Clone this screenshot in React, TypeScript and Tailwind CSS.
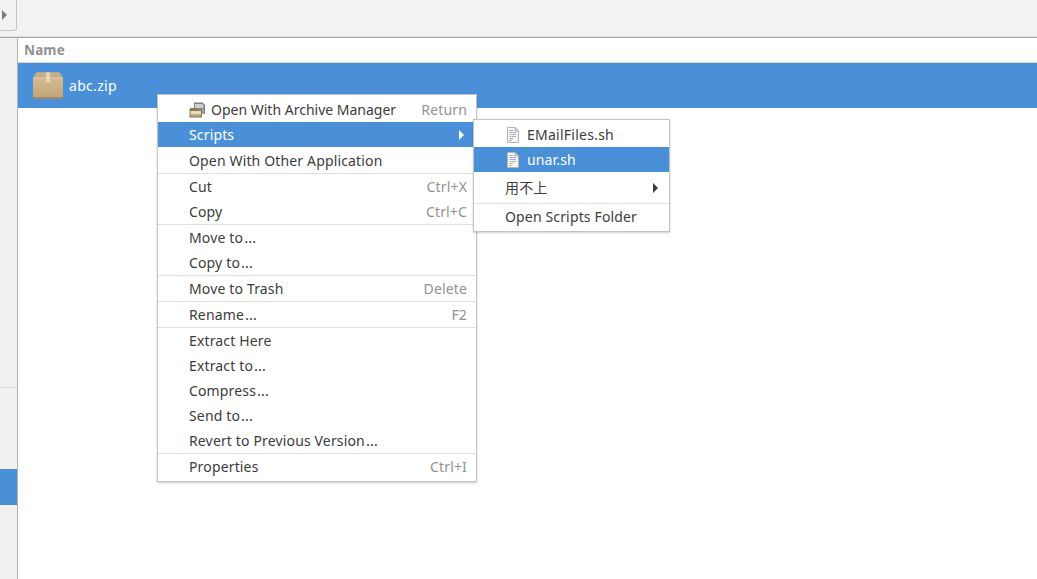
import React from 'react';

type Row = { label: string; hint?: string; icon?: boolean; active?: boolean; arrow?: boolean; tall?: boolean };

const mainMenu: Row[][] = [
  [
    { label: 'Open With Archive Manager', hint: 'Return', icon: true },
    { label: 'Scripts', active: true, arrow: true },
    { label: 'Open With Other Application', tall: true },
  ],
  [
    { label: 'Cut', hint: 'Ctrl+X' },
    { label: 'Copy', hint: 'Ctrl+C' },
  ],
  [{ label: 'Move to…' }, { label: 'Copy to…' }],
  [{ label: 'Move to Trash', hint: 'Delete' }],
  [{ label: 'Rename…', hint: 'F2' }],
  [
    { label: 'Extract Here' },
    { label: 'Extract to…' },
    { label: 'Compress…' },
    { label: 'Send to…' },
    { label: 'Revert to Previous Version…' },
  ],
  [{ label: 'Properties', hint: 'Ctrl+I' }],
];

const PackageIcon = () => (
  <svg width="30" height="27" viewBox="0 0 30 27" className="shrink-0">
    <defs>
      <linearGradient id="boxBody" x1="0" y1="0" x2="0" y2="1">
        <stop offset="0" stopColor="#d8c19e" />
        <stop offset="1" stopColor="#c3a475" />
      </linearGradient>
    </defs>
    <path d="M4 .5h22a1 1 0 0 1 .8.4L30 6v19.5a1 1 0 0 1-1 1H1a1 1 0 0 1-1-1V6L3.2.9A1 1 0 0 1 4 .5z" fill="url(#boxBody)" />
    <path d="M4 .5h22L30 6H0z" fill="#c9ae87" />
    <path d="M0 6h30" stroke="#e3d2b6" strokeWidth="0.8" />
    <path d="M13 .5h4v10h-4z" fill="#e5d7c0" />
    <path d="M0 25.2h30v.8a.5.5 0 0 1-.5.5H.5A.5.5 0 0 1 0 26z" fill="#9a7b4d" />
  </svg>
);

const ArchiveIcon = () => (
  <svg width="16" height="16" viewBox="0 0 16 16" className="shrink-0">
    <path d="M5 .5h8.500L16 3v9H5z" fill="#7f8182" />
    <path d="M6 2h7l1.500 1.500V6H6z" fill="#cfd1d1" />
    <path d="M8 7h7v5H8z" fill="#a5a7a6" />
    <path d="M.5 7.500 1.500 6H6l1 1.500h6V15a.5.5 0 0 1-.5.5H1a.5.5 0 0 1-.5-.5z" fill="#857850" />
    <path d="M1.500 9H12v3.500H1.500z" fill="#e9dfc0" />
    <path d="M1.500 12.500H12v2H1.500z" fill="#bcab7e" />
  </svg>
);

const ScriptIcon = () => (
  <svg width="12" height="16" viewBox="0 0 12 16" className="shrink-0">
    <path d="M.5.5h7.500l3.500 3.500v11.500H.5z" fill="#f5f5f3" stroke="#b4b4b4" />
    <path d="M8 .5V4h3.500z" fill="#d8d8d8" stroke="#b4b4b4" />
    <path d="M2.500 3.500h3.500" stroke="#a3a3a3" />
    <path d="M2.500 5.500h2.500M5.500 5.500h3.500" stroke="#8fb0d3" />
    <path d="M2.500 7.500h6.500" stroke="#d59ed4" />
    <path d="M2.500 9.500h2M5 9.500h4" stroke="#adadad" />
    <path d="M2.500 11.500h3.500" stroke="#7fc596" />
    <path d="M2.500 13.500h2" stroke="#e0787c" />
  </svg>
);

const Caret = ({ className }: { className: string }) => (
  <div className={`h-0 w-0 border-y-[5px] border-l-[5px] border-y-transparent ${className}`} />
);

// the reference font draws a wider ellipsis
const Label = ({ text }: { text: string }) =>
  text.endsWith('…') ? (
    <span>
      {text.slice(0, -1)}
      <span className="ml-[1px] text-[15px] leading-none">…</span>
    </span>
  ) : (
    <span>{text}</span>
  );

const MenuRow = ({ row }: { row: Row }) => (
  <div
    className={`flex items-center justify-between pr-[9px] pl-[31px] ${row.tall ? 'h-[26px]' : 'h-[25px]'} ${
      row.active ? 'bg-[#4a90d9] text-white' : 'text-[#3c3c3c]'
    }`}
  >
    <div className={`flex items-center gap-[6px] ${row.icon ? 'tracking-[0px]' : ''}`}>
      {row.icon && <ArchiveIcon />}
      <Label text={row.label} />
    </div>
    {row.hint && <span className="text-[#929292]">{row.hint}</span>}
    {row.arrow && <Caret className="mr-[3px] border-l-white" />}
  </div>
);

export default function App() {
  return (
    <div
      className="relative flex h-screen w-full flex-col overflow-hidden bg-white text-[14px] tracking-[0.15px]"
      style={{ fontFamily: '"Noto Sans", "Noto Sans CJK SC", sans-serif' }}
    >
      {/* toolbar */}
      <div className="h-[38px] shrink-0 border-b border-[#a9a9a9] bg-[#f2f2f2] shadow-[inset_0_-1px_0_#dddddd]">
        <div className="flex h-[31px] w-[17px] items-center rounded-br-[3px] border-r border-b border-[#c4c4c4] pl-[2px]">
          <Caret className="border-l-[#7b7b7b]" />
        </div>
      </div>

      <div className="flex min-h-0 flex-1">
        {/* sidebar */}
        <div className="flex w-[18px] shrink-0 flex-col border-r border-[#b3b3b3] bg-[#f2f1f0]">
          <div className="h-[350px] shrink-0 border-b border-[#dcdcdc]" />
          <div className="h-[81px] shrink-0" />
          <div className="h-[36px] shrink-0 bg-[#4a90d9]" />
        </div>

        {/* file list */}
        <div className="min-w-0 flex-1">
          <div className="flex h-[25px] items-center border-b border-[#dcdcdc] pt-[1px] pl-[6px] text-[13.5px] font-bold text-[#8f9193]">
            Name
          </div>
          <div className="flex h-[45px] items-center gap-[6px] bg-[#4a90d9] pl-[15px] text-white">
            <PackageIcon />
            <span className="tracking-[0.3px]">abc.zip</span>
          </div>
        </div>
      </div>

      {/* context menu */}
      <div className="absolute top-[94px] left-[157px] w-[320px] border border-[#c4c4c4] bg-white py-[2px] shadow-[0_1px_2px_rgba(0,0,0,0.2)]">
        {mainMenu.map((group, i) => (
          <div key={i} className={i > 0 ? 'border-t border-[#e0e0e0]' : ''}>
            {group.map((row) => (
              <MenuRow key={row.label} row={row} />
            ))}
          </div>
        ))}
      </div>

      {/* scripts submenu */}
      <div className="absolute top-[119px] left-[473px] w-[197px] border border-[#c4c4c4] bg-white py-[2px] text-[#3c3c3c] shadow-[0_1px_2px_rgba(0,0,0,0.2)]">
        <div className="flex h-[25px] items-center gap-[8px] pl-[33px]">
          <ScriptIcon />
          <span className="tracking-[0.25px]">EMailFiles.sh</span>
        </div>
        <div className="flex h-[25px] items-center gap-[8px] bg-[#4a90d9] pl-[33px] text-white">
          <ScriptIcon />
          <span>unar.sh</span>
        </div>
        <div className="flex h-[31px] items-center justify-between pr-[11px] pl-[31px]">
          <span>用不上</span>
          <Caret className="border-l-[#3c3c3c]" />
        </div>
        <div className="flex h-[26px] items-center border-t border-[#e0e0e0] pl-[31px]">Open Scripts Folder</div>
      </div>
    </div>
  );
}
